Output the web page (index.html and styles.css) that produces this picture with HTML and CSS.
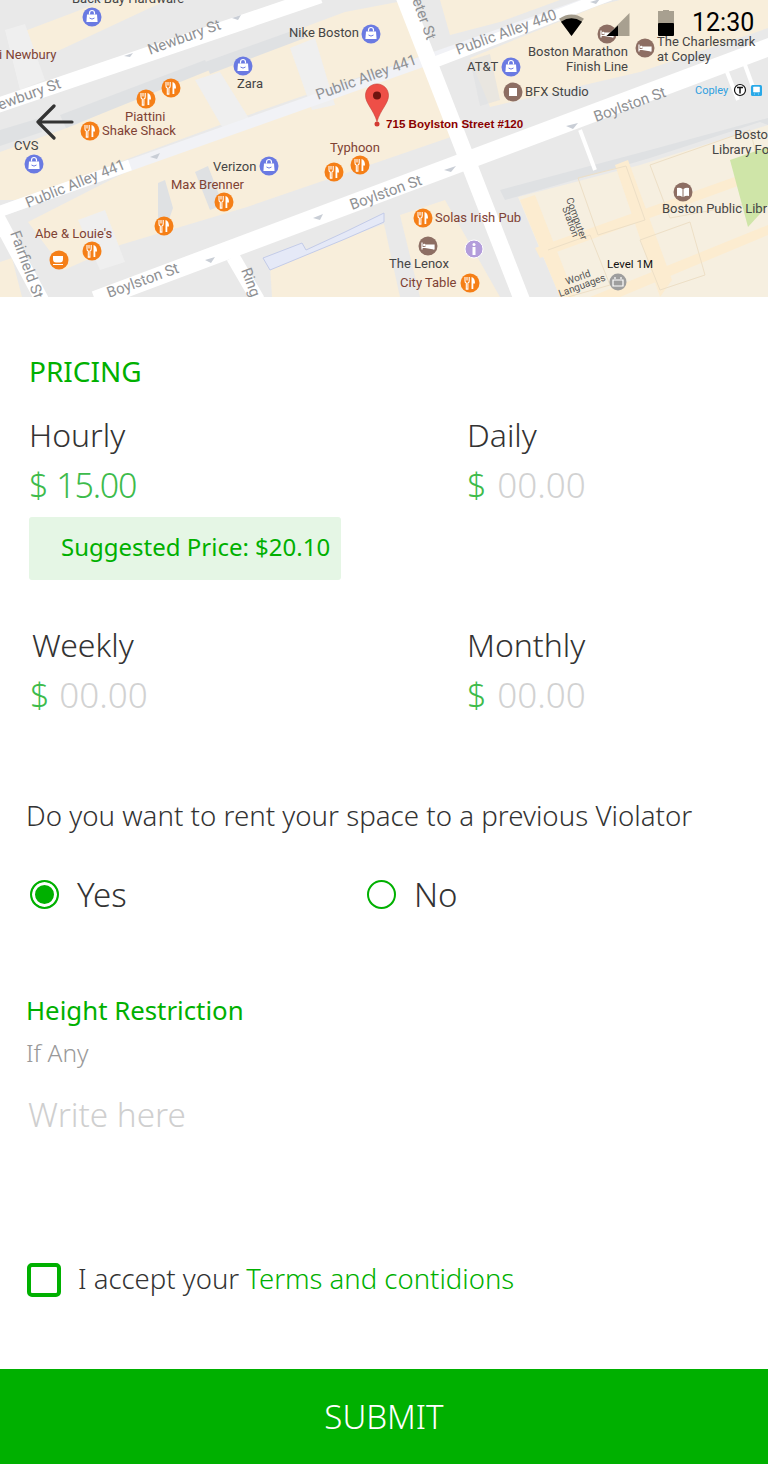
FILE: index.html
```html
<!DOCTYPE html>
<html lang="en">
<head>
<meta charset="utf-8">
<title>Pricing</title>
<link rel="stylesheet" href="styles.css">
</head>
<body>
<svg class="defs" width="0" height="0">
  <defs>
    <symbol id="food" viewBox="-10 -10 20 20" overflow="visible">
      <circle r="9.5" fill="#f57f17"/>
      <path d="M-5-6v4q0 1.600 1.300 2.100v6h1.600v-6q1.300-.5 1.300-2.100v-4M-3-6v3.500" fill="none" stroke="#fff" stroke-width="1.100"/>
      <path d="M1.500 6v-12q3.500.6 3.500 6.500h-1.700v5.500z" fill="#fff"/>
    </symbol>
    <symbol id="shop" viewBox="-10 -10 20 20" overflow="visible">
      <circle r="9.5" fill="#6a7ae2"/>
      <path d="M-5-2.500h10l.6 7.500h-11.200z" fill="#fff"/>
      <path d="M-2.500-2.500v-1.500a2.500 2.500 0 0 1 5 0v1.500" fill="none" stroke="#fff" stroke-width="1.200"/>
      <path d="M-2.500 1q2.500 2.200 5 0" fill="none" stroke="#6a7ae2" stroke-width="1"/>
    </symbol>
    <symbol id="hotel" viewBox="-10 -10 20 20" overflow="visible">
      <circle r="9.5" fill="#8d6e63"/>
      <path d="M-6-3.500v7M-6 1.500h12v2M6 1.500v-2.500h-8v2.500" fill="#fff" stroke="#fff" stroke-width="1.200"/>
      <circle cx="-3.700" cy="-1" r="1.300" fill="#fff"/>
    </symbol>
  </defs>
</svg>

<header class="hero">
  <svg class="map" viewBox="0 0 768 297" role="img" aria-label="Map of Boylston Street">
    <rect width="768" height="297" fill="#e9e9e9"/>

    <g fill="#f8eedb">
      <path d="M22 32 75 12 105 0h62L60 50 35 58z"/>
      <path d="M0 152 75 125 200 70 310 25 345 12 408 0l17 55-125 42-80 28-90 33-105 42H0z"/>
      <path d="M28 222 130 170 300 108 384 80l45-16 22 73-67 23-137 47-127 38-56 25z"/>
      <path d="M440 0h120l-60 22-50 13z"/>
      <path d="M470 58 600 5l20-5h148v28L640 72l-150 35z"/>
      <path d="M400 215 445 200 500 297H420z"/>
      <path d="M270 266 384 224 400 297H272z"/>
      <path d="M0 262 12 258 22 297H0z"/>
    </g>
    <path d="M518 197 640 165 768 125V297H560z" fill="#f6efe0"/>

    <g fill="#dfe1e3">
      <path d="M0 130 40 118 42 132 0 146z"/>
      <path d="M60 115 205 60 210 70 66 128z"/>
      <path d="M205 62 300 28 305 38 210 74z"/>
      <path d="M158 233 166 228 173 208 165 180 158 183z"/>
      <path d="M195 172 208 166 223 205 210 210z"/>
      <path d="M505 200 650 158 760 122 768 125V118L650 150 500 190z"/>
      <path d="M470 60 490 54 500 100 480 106z" opacity=".6"/>
    </g>
    <g fill="#efefef">
      <path d="M5 30 25 24 45 80 20 90z"/>
      <path d="M195 80 220 72 250 120 225 132z"/>
      <path d="M290 48 315 38 335 105 312 110z"/>
      <path d="M78 220 105 210 125 262 100 270z"/>
    </g>

    <g fill="none" stroke="#fff" stroke-linecap="butt">
      <path d="M-10 108 320-4" stroke-width="15"/>
      <path d="M-10 215 610-5" stroke-width="11" stroke="#f1f2f6"/>
      <path d="M-10 215 130 165" stroke-width="11"/>
      <path d="M430 64 610-5" stroke-width="11"/>
      <path d="M95 300 780 43" stroke-width="18"/>
      <path d="M403-5 522 300" stroke-width="16"/>
      <path d="M-6 210 42 300" stroke-width="14"/>
      <path d="M233 257 258 300" stroke-width="14"/>
      <path d="M580 130 595 170" stroke-width="4"/>
      <path d="M727 72 738 100M745 65 756 95" stroke-width="4"/>
    </g>

    <path d="M263 258 302 243 306 250 345 232 384 213v9l-39 17-75 31z" fill="#e5e9f7" stroke="#c3cbe8"/>

    <g fill="#fcecd0">
      <path d="M520 200 535 195 575 297H560z"/>
      <path d="M615 165 628 160 672 280 660 297z"/>
      <path d="M535 248 768 165V175L540 258z"/>
      <path d="M590 297 768 225V235L620 297z"/>
    </g>
    <g fill="none" stroke="#eddfc6">
      <path d="M578 178 626 166 645 220 598 235z"/>
      <path d="M548 250 590 235 610 285 568 297"/>
      <path d="M640 240 690 222 705 275 660 290z"/>
      <path d="M650 165 750 130 768 200 670 218z"/>
    </g>
    <path d="M730 160 768 147v58l-20 22z" fill="#cfe5a8"/>

    <g fill="#c9ced6">
      <path d="m124 56 9-3-3 4z"/>
      <path d="m232 18 9-3-3 5z"/>
      <path d="m150 157 10-4-3 6z"/>
      <path d="m313 218 10-4-3 6z"/>
      <path d="m205 260 10-3-4 6z"/>
      <path d="m566 126 12-3-5 6z"/>
      <path d="m444 170 12-4-5 6z"/>
      <path d="m590 2 10-3-4 5z"/>
    </g>

    <g class="road-label">
      <text transform="translate(150 55) rotate(-20)">Newbury St</text>
      <text transform="translate(0 110) rotate(-20)">ewbury St</text>
      <text transform="translate(28 208) rotate(-22)">Public Alley 441</text>
      <text transform="translate(318 100) rotate(-20)">Public Alley 441</text>
      <text transform="translate(458 55) rotate(-20)">Public Alley 440</text>
      <text transform="translate(109 298) rotate(-20)">Boylston St</text>
      <text transform="translate(352 210) rotate(-20)">Boylston St</text>
      <text transform="translate(596 122) rotate(-20)">Boylston St</text>
      <text transform="translate(412 0) rotate(70)">eter St</text>
      <text transform="translate(10 233) rotate(70)">Fairfield St</text>
      <text transform="translate(241 270) rotate(70)">Ring</text>
    </g>

    <g class="brown-label">
      <text x="-1" y="59">i Newbury</text>
      <text x="125" y="121">Piattini</text>
      <text x="102" y="135">Shake Shack</text>
      <text x="171" y="189">Max Brenner</text>
      <text x="330" y="152">Typhoon</text>
      <text x="35" y="238">Abe &amp; Louie's</text>
      <text x="435" y="222">Solas Irish Pub</text>
      <text x="400" y="287">City Table</text>
    </g>
    <g class="dark-label">
      <text x="72" y="3">Back Bay Hardware</text>
      <text x="289" y="37">Nike Boston</text>
      <text x="237" y="88">Zara</text>
      <text x="14" y="150">CVS</text>
      <text x="213" y="171">Verizon</text>
      <text x="528" y="56">Boston Marathon</text>
      <text x="566" y="71">Finish Line</text>
      <text x="467" y="71">AT&amp;T</text>
      <text x="525" y="96">BFX Studio</text>
      <text x="657" y="46">The Charlesmark</text>
      <text x="657" y="61">at Copley</text>
      <text x="768" y="139" text-anchor="end">Bosto</text>
      <text x="712" y="154">Library Fo</text>
      <text x="662" y="213">Boston Public Libr</text>
      <text x="389" y="268">The Lenox</text>
    </g>
    <text class="small-black" x="607" y="268">Level 1M</text>
    <g class="tiny-label">
      <text transform="translate(566 199) rotate(70)">Computer</text>
      <text transform="translate(562 208) rotate(70)">Station</text>
      <text transform="translate(567 285) rotate(-20)">World</text>
      <text transform="translate(560 297) rotate(-20)">Languages</text>
    </g>
    <text class="transit-label" x="695" y="94">Copley</text>

    <use href="#shop" x="82" y="7" width="20" height="20"/>
    <use href="#shop" x="361" y="24" width="20" height="20"/>
    <use href="#shop" x="233" y="56" width="20" height="20"/>
    <use href="#shop" x="24" y="154" width="20" height="20"/>
    <use href="#shop" x="259" y="156" width="20" height="20"/>
    <use href="#shop" x="501" y="57" width="20" height="20"/>

    <use href="#food" x="161" y="78" width="20" height="20"/>
    <use href="#food" x="136" y="89" width="20" height="20"/>
    <use href="#food" x="80" y="121" width="20" height="20"/>
    <use href="#food" x="324" y="162" width="20" height="20"/>
    <use href="#food" x="350" y="155" width="20" height="20"/>
    <use href="#food" x="214" y="192" width="20" height="20"/>
    <use href="#food" x="154" y="216" width="20" height="20"/>
    <use href="#food" x="82" y="241" width="20" height="20"/>
    <use href="#food" x="413" y="208" width="20" height="20"/>
    <use href="#food" x="460" y="273" width="20" height="20"/>

    <circle cx="59" cy="260" r="9.500" fill="#f57f17"/>
    <path d="M53 256h10v3q0 3.500-3 3.500h-4q-3 0-3-3.500zM53 264h10v1H53z" fill="#fff"/>

    <use href="#hotel" x="635" y="38" width="20" height="20"/>
    <use href="#hotel" x="418" y="236" width="20" height="20"/>
    <use href="#hotel" x="597" y="24" width="20" height="20"/>

    <circle cx="513" cy="92" r="9.500" fill="#8d6e63"/>
    <rect x="509" y="88" width="8" height="8" fill="#fff"/>

    <circle cx="683" cy="192" r="9.500" fill="#8d6e63"/>
    <path d="M677 188q3-1 5.500 1v8q-2.500-2-5.500-1zM689 188q-3-1-5.500 1v8q2.500-2 5.500-1z" fill="#fff"/>

    <circle cx="474" cy="249" r="9" fill="#b39ddb" stroke="#fff"/>
    <circle cx="474" cy="244.500" r="1.500" fill="#fff"/>
    <rect x="472.500" y="247" width="3" height="8" fill="#fff"/>

    <circle cx="618" cy="282" r="8.500" fill="#9e9e9e"/>
    <path d="M613 280h10v6h-10zM615 277v2M621 277v2" fill="none" stroke="#fff" stroke-width="1.200"/>

    <circle cx="740" cy="90" r="5.500" fill="#fff" stroke="#111" stroke-width="1.200"/>
    <path d="M737 87.500h6M740 87.500v6" stroke="#111" stroke-width="1.500"/>
    <rect x="751" y="85" width="11" height="11" rx="1.500" fill="#29a9e8"/>
    <path d="M753.500 87h6v5h-6zM754 94h1M758 94h1" fill="#fff" stroke="#fff" stroke-width=".6"/>

    <path d="M377 84c-6.500 0-11.500 5-11.500 11.500 0 8 8 14 11.500 26 3.500-12 11.500-18 11.500-26C388.500 89 383.500 84 377 84z" fill="#ee4f47" stroke="#c23a33" stroke-width=".6"/>
    <circle cx="377" cy="95.500" r="4" fill="#6e1410"/>
    <circle cx="377" cy="124" r="2.500" fill="#d33a32"/>
    <text class="pin-label" x="386" y="128">715 Boylston Street #120</text>
  </svg>

  <svg class="back" viewBox="0 0 40 38" aria-label="Back">
    <path d="M37 18H3M19 2 3 18l16 16" fill="none" stroke="#333" stroke-width="3.200" stroke-linecap="round" stroke-linejoin="round"/>
  </svg>

  <div class="status">
    <svg class="st-wifi" viewBox="0 0 26 24">
      <path d="M0 6Q13-3 26 6L13 24z" fill="#a49c8c"/>
      <path d="M2 9Q13 2 24 9L13 24z" fill="#000"/>
    </svg>
    <svg class="st-signal" viewBox="0 0 24 24">
      <path d="M0 24 24 0v24z" fill="#a8a090"/>
      <path d="M0 24 12 13v11z" fill="#000"/>
    </svg>
    <svg class="st-battery" viewBox="0 0 16 26">
      <path d="M5 0h6v1h5v13H0V1h5z" fill="#a8a090"/>
      <rect y="13" width="16" height="13" rx="1" fill="#000"/>
    </svg>
    <span class="st-time">12:30</span>
  </div>
</header>

<main class="form">
  <h2 class="section-title">PRICING</h2>

  <div class="price-grid">
    <div class="price-cell">
      <div class="price-label">Hourly</div>
      <div class="price-value"><span class="cur">$</span> <span class="amt">15.00</span></div>
      <div class="suggest">Suggested Price: $20.10</div>
    </div>
    <div class="price-cell">
      <div class="price-label">Daily</div>
      <div class="price-value"><span class="cur">$</span> <span class="ph">00.00</span></div>
    </div>
    <div class="price-cell shifted">
      <div class="price-label">Weekly</div>
      <div class="price-value"><span class="cur unshift">$</span> <span class="ph tight">00.00</span></div>
    </div>
    <div class="price-cell">
      <div class="price-label">Monthly</div>
      <div class="price-value"><span class="cur">$</span> <span class="ph">00.00</span></div>
    </div>
  </div>

  <p class="question">Do you want to rent your space to a previous Violator</p>

  <div class="radios">
    <div class="radio-item"><span class="radio on"></span><span class="radio-text">Yes</span></div>
    <div class="radio-item"><span class="radio"></span><span class="radio-text">No</span></div>
  </div>

  <div class="height-title">Height Restriction</div>
  <div class="height-sub">If Any</div>
  <div class="height-input">Write here</div>

  <div class="terms">
    <span class="check"></span>
    <span class="terms-text">I accept your <span class="link">Terms and contidions</span></span>
  </div>
</main>

<button class="submit" type="button">SUBMIT</button>
</body>
</html>
```
FILE: styles.css
```css
* { box-sizing: border-box; }

html, body { margin: 0; padding: 0; background: #fff; }

body {
  width: 768px;
  height: 1464px;
  display: flex;
  flex-direction: column;
  overflow: hidden;
  font-family: "Noto Sans", "Open Sans", sans-serif;
  font-weight: 300;
  color: #333;
}

.defs { position: absolute; }

.hero { position: relative; height: 297px; flex: none; overflow: hidden; }
.map { display: block; width: 768px; height: 297px; }

.road-label text { font: 400 15px Roboto, sans-serif; fill: #8f9194; }
.brown-label text { font: 400 13px Roboto, sans-serif; fill: #7f4234; }
.dark-label text { font: 400 13px Roboto, sans-serif; fill: #454545; }
.small-black { font: 400 11.500px Roboto, sans-serif; fill: #111; }
.tiny-label text { font: 400 10px Roboto, sans-serif; fill: #555; }
.transit-label { font: 400 11px Roboto, sans-serif; fill: #2f9fe0; }
.pin-label { font: 700 11.600px "Liberation Sans", sans-serif; fill: #8b0000; }

.back { position: absolute; left: 35px; top: 104px; width: 40px; height: 38px; }

.status { position: absolute; top: 10px; left: 559px; display: flex; align-items: flex-end; height: 26px; }
.st-wifi { width: 25px; height: 23px; display: block; }
.st-signal { width: 24px; height: 23px; display: block; margin-left: 22px; }
.st-battery { width: 16px; height: 26px; display: block; margin-left: 28px; }
.st-time { font: 400 25px/26px Roboto, sans-serif; color: #000; margin-left: 18px; }

.form { flex: 1; padding: 54px 0 0 29px; }

.section-title { margin: 0; font-size: 28px; line-height: 40px; font-weight: 400; color: #00b000; }

.price-grid { display: grid; grid-template-columns: 438px 1fr; row-gap: 45px; margin-top: 24px; }
.price-cell.shifted { padding-left: 3px; }
.price-label { font-size: 32px; line-height: 40px; }
.price-value { font-size: 34px; line-height: 40px; margin-top: 10px; }
.cur { color: #3dbb4b; }
.amt { color: #3dbb4b; letter-spacing: -1.2px; margin-left: -1px; }
.ph { color: #d2d2d2; font-size: 35px; margin-left: 2px; }
.ph.tight { margin-left: 1px; }
.unshift { margin-left: -2px; }

.suggest {
  width: 312px;
  height: 63px;
  margin-top: 12px;
  padding: 0 0 5px 32px;
  display: flex;
  align-items: center;
  white-space: nowrap;
  font-size: 24px;
  font-weight: 400;
  color: #00b000;
  background: #e5f6e5;
  border-radius: 3px;
}

.question { margin: 82px 0 0 -3px; font-size: 27.700px; line-height: 36px; }

.radios { display: flex; margin-top: 41px; height: 40px; }
.radio-item { display: flex; align-items: center; width: 337px; }
.radio {
  width: 29px;
  height: 29px;
  flex: none;
  border: 2px solid #00b000;
  border-radius: 50%;
  margin: 0 18px 0 1px;
}
.radio.on { background: #00b000; box-shadow: inset 0 0 0 3px #fff; }
.radio-text { font-size: 33px; line-height: 40px; margin-top: 2px; }

.height-title { margin: 80px 0 0 -3px; font-size: 25.800px; line-height: 32px; font-weight: 400; color: #00b000; }
.height-sub { margin: 13px 0 0 -3px; font-size: 24.500px; line-height: 28px; color: #999; }
.height-input { margin: 27px 0 0 -1px; font-size: 33.300px; line-height: 40px; color: #cfcfcf; }

.terms { display: flex; align-items: center; margin: 129px 0 0 -2px; height: 34px; }
.check { width: 34px; height: 34px; flex: none; border: 4px solid #00b000; border-radius: 5px; margin-right: 17px; }
.terms-text { font-size: 27.500px; line-height: 34px; margin-bottom: 2px; }
.link { color: #00b000; }

.submit {
  flex: none;
  height: 95px;
  width: 100%;
  padding: 0;
  border: 0;
  background: #00b000;
  color: #fff;
  font-family: inherit;
  font-weight: 300;
  font-size: 33px;
}
```
